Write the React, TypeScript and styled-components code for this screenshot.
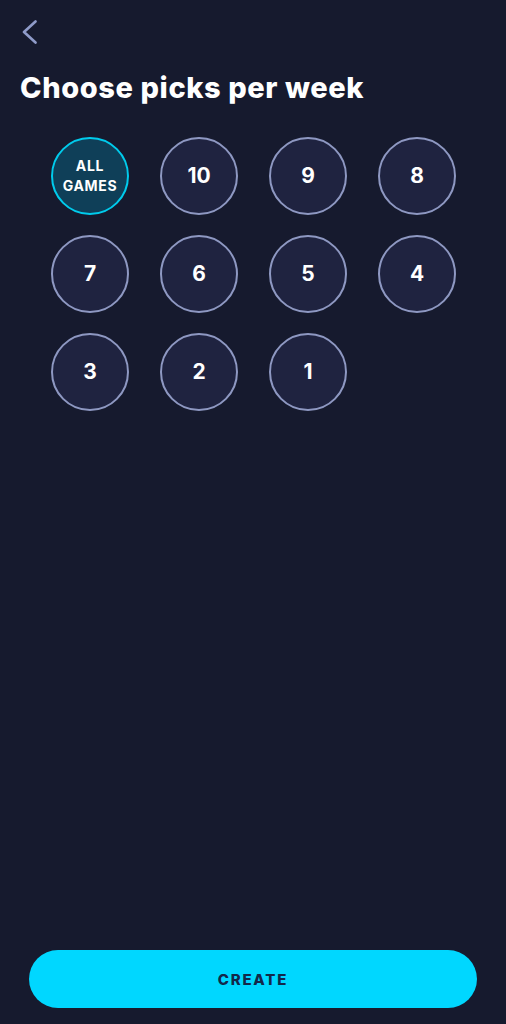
import React, { useState } from "react";
import styled, { createGlobalStyle } from "styled-components";

const GlobalStyle = createGlobalStyle`
  html, body {
    margin: 0;
    padding: 0;
    background: #161a2e;
  }
  body {
    font-family: "Inter", "Noto Sans", sans-serif;
  }
  * { box-sizing: border-box; }
`;

const Screen = styled.div`
  width: 506px;
  height: 1024px;
  background: #161a2e;
  display: flex;
  flex-direction: column;
  overflow: hidden;
`;

const Header = styled.div`
  display: flex;
  flex-direction: column;
  padding: 20px 0 0 20px;
`;

const BackButton = styled.button`
  width: 24px;
  height: 24px;
  padding: 0;
  margin-left: 2px;
  border: none;
  background: transparent;
  display: flex;
  align-items: center;
  justify-content: flex-start;
  cursor: pointer;
`;

const Title = styled.h1`
  margin: 27px 0 0 0;
  font-family: "Inter", "Noto Sans", sans-serif;
  font-weight: 800;
  font-size: 29px;
  line-height: 34px;
  letter-spacing: 0.6px;
  color: #ffffff;
`;

const Grid = styled.div`
  display: grid;
  grid-template-columns: repeat(4, 78px);
  column-gap: 31px;
  row-gap: 20px;
  padding: 0 0 0 51px;
  margin-top: 32px;
`;

const Choice = styled.button<{ $active?: boolean }>`
  width: 78px;
  height: 78px;
  border-radius: 50%;
  padding: 0;
  border: 2px solid ${(p) => (p.$active ? "#00cbec" : "#8e98c2")};
  background: ${(p) => (p.$active ? "#0f3f58" : "#1f2340")};
  color: #ffffff;
  font-family: "Inter", "Noto Sans", sans-serif;
  font-weight: 700;
  font-size: ${(p) => (p.$active ? "14px" : "21px")};
  line-height: ${(p) => (p.$active ? "20px" : "24px")};
  letter-spacing: ${(p) => (p.$active ? "0.7px" : "0")};
  display: flex;
  align-items: center;
  justify-content: center;
  text-align: center;
  cursor: pointer;
`;

const Spacer = styled.div`
  flex: 1;
`;

const Footer = styled.div`
  padding: 0 29px 16px 29px;
`;

const CreateButton = styled.button`
  width: 100%;
  height: 58px;
  border: none;
  border-radius: 29px;
  background: #00d7ff;
  color: #13284a;
  font-family: "Inter", "Noto Sans", sans-serif;
  font-weight: 800;
  font-size: 15px;
  letter-spacing: 1.8px;
  cursor: pointer;
`;

const options = ["ALL GAMES", "10", "9", "8", "7", "6", "5", "4", "3", "2", "1"];

export default function App() {
  const [selected, setSelected] = useState("ALL GAMES");
  return (
    <>
      <GlobalStyle />
      <Screen>
        <Header>
          <BackButton aria-label="Back">
            <svg width="16" height="24" viewBox="0 0 16 24" fill="none">
              <path
                d="M13.5 1.5 L2 12 L13.5 22.5"
                stroke="#8f9bc9"
                strokeWidth="2.6"
                strokeLinecap="round"
                strokeLinejoin="round"
              />
            </svg>
          </BackButton>
          <Title>Choose picks per week</Title>
        </Header>
        <Grid>
          {options.map((o) => (
            <Choice key={o} $active={o === selected} onClick={() => setSelected(o)}>
              {o === "ALL GAMES" ? (
                <span>
                  ALL
                  <br />
                  GAMES
                </span>
              ) : (
                o
              )}
            </Choice>
          ))}
        </Grid>
        <Spacer />
        <Footer>
          <CreateButton>CREATE</CreateButton>
        </Footer>
      </Screen>
    </>
  );
}
